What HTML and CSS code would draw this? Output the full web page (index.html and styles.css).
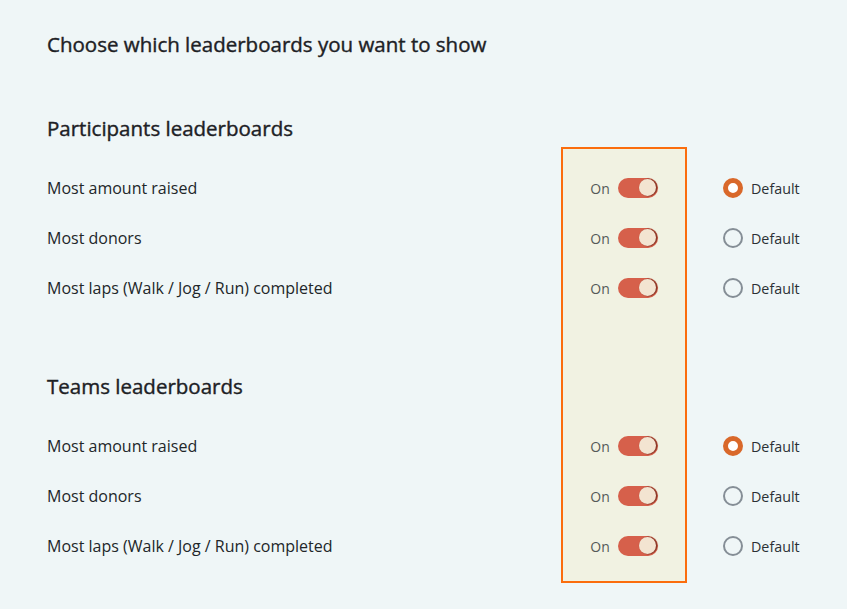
FILE: index.html
```html
<!DOCTYPE html>
<html lang="en">
<head>
  <meta charset="UTF-8" />
  <meta name="viewport" content="width=device-width, initial-scale=1.0" />
  <title>Leaderboards</title>
  <link rel="stylesheet" href="styles.css">
</head>
<body>
  <div class="page">
    <h1>Choose which leaderboards you want to show</h1>

    <div class="board-grid">
      <!-- Columna resaltada -->
      <div class="highlight"></div>

      <!-- Participants -->
      <h2 class="section-title">Participants leaderboards</h2>

      <div class="row-label">Most amount raised</div>
      <div class="toggle-cell"><span class="toggle-text">On</span><span class="toggle on"><span class="knob"></span></span></div>
      <label class="radio-cell"><span class="radio checked"></span>Default</label>

      <div class="row-label">Most donors</div>
      <div class="toggle-cell"><span class="toggle-text">On</span><span class="toggle on"><span class="knob"></span></span></div>
      <label class="radio-cell"><span class="radio"></span>Default</label>

      <div class="row-label">Most laps (Walk / Jog / Run) completed</div>
      <div class="toggle-cell"><span class="toggle-text">On</span><span class="toggle on"><span class="knob"></span></span></div>
      <label class="radio-cell"><span class="radio"></span>Default</label>

      <!-- Teams -->
      <h2 class="section-title teams">Teams leaderboards</h2>

      <div class="row-label">Most amount raised</div>
      <div class="toggle-cell"><span class="toggle-text">On</span><span class="toggle on"><span class="knob"></span></span></div>
      <label class="radio-cell"><span class="radio checked"></span>Default</label>

      <div class="row-label">Most donors</div>
      <div class="toggle-cell"><span class="toggle-text">On</span><span class="toggle on"><span class="knob"></span></span></div>
      <label class="radio-cell"><span class="radio"></span>Default</label>

      <div class="row-label">Most laps (Walk / Jog / Run) completed</div>
      <div class="toggle-cell"><span class="toggle-text">On</span><span class="toggle on"><span class="knob"></span></span></div>
      <label class="radio-cell"><span class="radio"></span>Default</label>
    </div>
  </div>
</body>
</html>
```

FILE: styles.css
```css
body {
  margin: 0;
  background-color: #eff6f7;
  font-family: "Open Sans", Arial, sans-serif;
  color: #222629;
}

.page {
  padding: 30px 47px 26px 47px;
}

h1 {
  margin: 0 0 53px 0;
  font-size: 20.5px;
  line-height: 28px;
  font-weight: 400;
  -webkit-text-stroke: 0.4px #1d2125;
  color: #1d2125;
}

.board-grid {
  position: relative;
  display: grid;
  grid-template-columns: 1fr 126px 113px;
  grid-template-rows: repeat(8, auto);
}

/* se pinta detrás de la columna de toggles */
.highlight {
  position: absolute;
  grid-column: 2 / 3;
  grid-row: 2 / 9;
  top: -16px;
  bottom: -12px;
  left: 0;
  right: 0;
  background-color: #f1f2e2;
  border: 2px solid #fb6d0d;
}

.section-title {
  grid-column: 1;
  margin: 0 0 18px 0;
  font-size: 20.5px;
  line-height: 34px;
  font-weight: 400;
  -webkit-text-stroke: 0.4px #1d2125;
  color: #1d2125;
}

.section-title.teams {
  margin-top: 56px;
}

.row-label {
  grid-column: 1;
  height: 50px;
  display: flex;
  align-items: center;
  font-size: 16px;
}

.toggle-cell {
  grid-column: 2;
  position: relative;
  display: flex;
  align-items: center;
  justify-content: center;
  gap: 8px;
}

.toggle-text {
  font-size: 14px;
  color: #555a58;
}

.toggle {
  position: relative;
  width: 40px;
  height: 20px;
  border-radius: 10px;
  background-color: #d6604b;
}

.knob {
  position: absolute;
  top: 1px;
  right: 2px;
  width: 17px;
  height: 17px;
  border-radius: 50%;
  background-color: #f3e4d1;
  box-shadow: 1px 0 1px 0.5px rgba(110, 40, 25, 0.75);
}

.radio-cell {
  grid-column: 3;
  display: flex;
  align-items: center;
  gap: 8px;
  padding-left: 36px;
  font-size: 14.3px;
  color: #2b3035;
}

.radio {
  width: 16px;
  height: 16px;
  border-radius: 50%;
  border: 2px solid #858e96;
  flex-shrink: 0;
  background-color: transparent;
}

.radio.checked {
  width: 10px;
  height: 10px;
  border: 5px solid #d9682a;
  background-color: #fff;
}
```
